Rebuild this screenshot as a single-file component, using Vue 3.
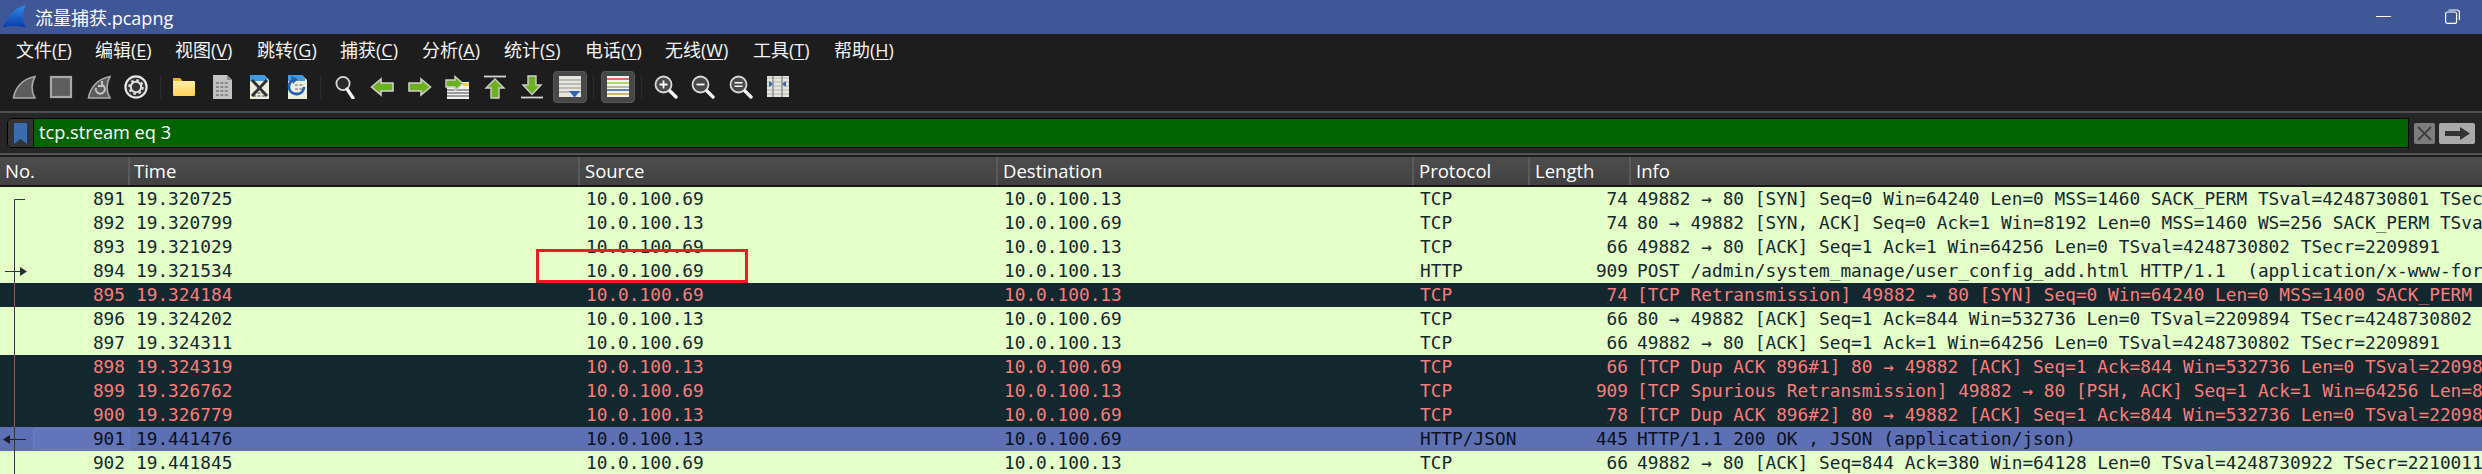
<script setup>
const menus = [
  ['文件(', 'F'], ['编辑(', 'E'], ['视图(', 'V'], ['跳转(', 'G'], ['捕获(', 'C'], ['分析(', 'A'],
  ['统计(', 'S'], ['电话(', 'Y'], ['无线(', 'W'], ['工具(', 'T'], ['帮助(', 'H']
]
const columns = ['No.', 'Time', 'Source', 'Destination', 'Protocol', 'Length', 'Info']
const A = '10.0.100.69'
const B = '10.0.100.13'
const rows = [
  ['891', '19.320725', A, B, 'TCP', '74', '49882 → 80 [SYN] Seq=0 Win=64240 Len=0 MSS=1460 SACK_PERM TSval=4248730801 TSecr=0 WS=256', ''],
  ['892', '19.320799', B, A, 'TCP', '74', '80 → 49882 [SYN, ACK] Seq=0 Ack=1 Win=8192 Len=0 MSS=1460 WS=256 SACK_PERM TSval=2209891 TSecr=4248730801', ''],
  ['893', '19.321029', A, B, 'TCP', '66', '49882 → 80 [ACK] Seq=1 Ack=1 Win=64256 Len=0 TSval=4248730802 TSecr=2209891', ''],
  ['894', '19.321534', A, B, 'HTTP', '909', 'POST /admin/system_manage/user_config_add.html HTTP/1.1  (application/x-www-form-urlencoded)', ''],
  ['895', '19.324184', A, B, 'TCP', '74', '[TCP Retransmission] 49882 → 80 [SYN] Seq=0 Win=64240 Len=0 MSS=1400 SACK_PERM TSval=4248730801 TSecr=0', 'bad'],
  ['896', '19.324202', B, A, 'TCP', '66', '80 → 49882 [ACK] Seq=1 Ack=844 Win=532736 Len=0 TSval=2209894 TSecr=4248730802', ''],
  ['897', '19.324311', A, B, 'TCP', '66', '49882 → 80 [ACK] Seq=1 Ack=1 Win=64256 Len=0 TSval=4248730802 TSecr=2209891', ''],
  ['898', '19.324319', B, A, 'TCP', '66', '[TCP Dup ACK 896#1] 80 → 49882 [ACK] Seq=1 Ack=844 Win=532736 Len=0 TSval=2209894 TSecr=4248730802', 'bad'],
  ['899', '19.326762', A, B, 'TCP', '909', '[TCP Spurious Retransmission] 49882 → 80 [PSH, ACK] Seq=1 Ack=1 Win=64256 Len=843 TSval=4248730802', 'bad'],
  ['900', '19.326779', B, A, 'TCP', '78', '[TCP Dup ACK 896#2] 80 → 49882 [ACK] Seq=1 Ack=844 Win=532736 Len=0 TSval=2209894 TSecr=4248730802', 'bad'],
  ['901', '19.441476', B, A, 'HTTP/JSON', '445', 'HTTP/1.1 200 OK , JSON (application/json)', 'hover'],
  ['902', '19.441845', A, B, 'TCP', '66', '49882 → 80 [ACK] Seq=844 Ack=380 Win=64128 Len=0 TSval=4248730922 TSecr=2210011', '']
]
const stripes = [3, 7, 11, 15, 19]
</script>

<template>
  <div class="app">
    <header class="titlebar">
      <svg class="logo" width="26" height="26" viewBox="0 0 26 26">
        <defs>
          <linearGradient id="logoFill" x1="0" y1="0" x2="0" y2="1">
            <stop offset="0" stop-color="#2f8fe8" />
            <stop offset="1" stop-color="#0a3aa8" />
          </linearGradient>
        </defs>
        <path d="M2 23.5C5 13 13 4 25 1C21 8 20 16 25 23.5C17 21.5 9 21.5 2 23.5Z" fill="url(#logoFill)" />
      </svg>
      <span class="title">流量捕获.pcapng</span>
      <div class="winctl">
        <svg width="15" height="15" viewBox="0 0 15 15"><path d="M0 7.5H15" stroke="#fff" stroke-width="1" /></svg>
        <svg width="15" height="15" viewBox="0 0 15 15" fill="none" stroke="#fff" stroke-width="1.2">
          <rect x="0.6" y="3" width="11" height="11.4" rx="2" />
          <path d="M3.5 1H12a2.4 2.4 0 0 1 2.4 2.4V11" />
        </svg>
      </div>
    </header>

    <nav class="menubar">
      <span v-for="m in menus" :key="m[1]" class="menu">{{ m[0] }}<u>{{ m[1] }}</u>)</span>
    </nav>

    <div class="toolbar">
      <span class="tool">
        <svg class="ic" viewBox="0 0 24 24"><path d="M1.5 23C3 13 10 4 23 1.5C19 9 19 16 23 23Z" fill="#5c5c5c" stroke="#a8a8a8" stroke-width="1.6" /></svg>
      </span>
      <span class="tool">
        <svg class="ic" viewBox="0 0 24 24"><rect x="2" y="2" width="20" height="20" fill="#5e5e5e" stroke="#a8a8a8" stroke-width="2.2" /></svg>
      </span>
      <span class="tool">
        <svg class="ic" viewBox="0 0 24 24">
          <path d="M1.5 23C3 13 10 4 23 1.5C19 9 19 16 23 23Z" fill="#5c5c5c" stroke="#a8a8a8" stroke-width="1.6" />
          <path d="M9 13a4.5 4.5 0 1 0 6-3M15 6v5h-4" fill="none" stroke="#c4c4c4" stroke-width="2" />
        </svg>
      </span>
      <span class="tool">
        <svg class="ic" viewBox="0 0 24 24" fill="none">
          <circle cx="12" cy="12" r="10.6" fill="#333" stroke="#e4e4e4" stroke-width="2.2" />
          <circle cx="12" cy="12" r="5.2" stroke="#e0e0e0" stroke-width="2" />
          <circle cx="12" cy="12" r="6.8" stroke="#e0e0e0" stroke-width="2" stroke-dasharray="2.6 2.74" />
        </svg>
      </span>
      <i class="sep"></i>
      <span class="tool">
        <svg class="ic" viewBox="0 0 24 24">
          <defs>
            <linearGradient id="folderFill" x1="0" y1="0" x2="0" y2="1">
              <stop offset="0" stop-color="#ffeeaa" />
              <stop offset="1" stop-color="#ffd257" />
            </linearGradient>
          </defs>
          <path d="M1 3H8L10 5V8H1Z" fill="#f0b023" />
          <rect x="1" y="6" width="22" height="15" rx="1" fill="url(#folderFill)" />
        </svg>
      </span>
      <span class="tool">
        <svg class="ic" viewBox="0 0 24 24">
          <path d="M3 0H17L22 5V24H3Z" fill="#c2c2c2" />
          <path d="M17 0V5H22Z" fill="#8c8c8c" />
          <path d="M6 8H19M6 12H19M6 16H19M6 20H19" stroke="#8a8a8a" stroke-width="2" stroke-dasharray="3 1.4" />
        </svg>
      </span>
      <span class="tool">
        <svg class="ic" viewBox="0 0 24 24">
          <path d="M3 0H17L22 5V24H3Z" fill="#eeeedd" />
          <path d="M3 0H17L20 3 V6H3Z" fill="#3f9ae0" />
          <path d="M6 18H19M6 21H19" stroke="#999" stroke-width="2" stroke-dasharray="3 1.4" />
          <path d="M5 5L20 21M20 5L5 21" stroke="#333" stroke-width="3" />
        </svg>
      </span>
      <span class="tool">
        <svg class="ic" viewBox="0 0 24 24">
          <path d="M3 0H17L22 5V24H3Z" fill="#eeeedd" />
          <path d="M3 0H17L20 3V6H3Z" fill="#3f9ae0" />
          <path d="M10 10H19M10 14H19M10 18H19" stroke="#aaa" stroke-width="2" stroke-dasharray="3 1.4" />
          <path d="M8 5A7.5 7.5 0 1 0 19 12" fill="none" stroke="#2260b0" stroke-width="2.6" />
          <path d="M6 1L13 4L8 9Z" fill="#2260b0" />
        </svg>
      </span>
      <i class="sep"></i>
      <span class="tool">
        <svg class="ic" viewBox="0 0 24 24">
          <circle cx="10" cy="8.5" r="6.6" fill="#2a2a2a" stroke="#d8d8d8" stroke-width="1.8" />
          <path d="M14 14L20 23" stroke="#f4f4f4" stroke-width="3.2" stroke-linecap="round" />
        </svg>
      </span>
      <span class="tool">
        <svg class="ic" viewBox="0 0 24 24"><path d="M1.5 12L11 4V8H23V16H11V20Z" fill="#6cb220" stroke="#cfcfcf" stroke-width="1.6" /></svg>
      </span>
      <span class="tool">
        <svg class="ic" viewBox="0 0 24 24"><path d="M22.5 12L13 4V8H1V16H13V20Z" fill="#6cb220" stroke="#cfcfcf" stroke-width="1.6" /></svg>
      </span>
      <span class="tool">
        <svg class="ic" viewBox="0 0 24 24">
          <rect x="2" y="12" width="22" height="12" fill="#f2f2f2" />
          <path d="M2 15H24M2 18H24M2 21H24" stroke="#444" stroke-width="1" />
          <rect x="12" y="7" width="12" height="5" fill="#f2f2f2" />
          <rect x="18" y="8" width="6" height="3" fill="#f0d040" />
          <path d="M18 8.5L10 1.5V5H1V12H10V15.5Z" fill="#6cb220" stroke="#cfcfcf" stroke-width="1.4" />
        </svg>
      </span>
      <span class="tool">
        <svg class="ic" viewBox="0 0 24 24">
          <path d="M1 1.5H23" stroke="#d4d4d4" stroke-width="1.8" />
          <path d="M12 4L21 13H16V23H8V13H3Z" fill="#6cb220" stroke="#cfcfcf" stroke-width="1.4" />
        </svg>
      </span>
      <span class="tool">
        <svg class="ic" viewBox="0 0 24 24">
          <path d="M1 22.5H23" stroke="#d4d4d4" stroke-width="1.8" />
          <path d="M8 1H16V10H21L12 19.5L3 10H8Z" fill="#6cb220" stroke="#cfcfcf" stroke-width="1.4" />
        </svg>
      </span>
      <span class="tool on">
        <svg class="ic" viewBox="0 0 24 24">
          <rect x="1" y="1" width="22" height="21" fill="#e6e6e0" />
          <path d="M1 5H23M1 9H23M1 13H23M1 17H23" stroke="#8f8f8a" stroke-width="1" />
          <path d="M11 16H22L16.5 22.5Z" fill="#2f66b4" />
        </svg>
      </span>
      <i class="sep"></i>
      <span class="tool on">
        <svg class="ic" viewBox="0 0 24 24">
          <rect x="1" y="1" width="22" height="21" fill="#f4f4f0" />
          <path d="M1 4H23" stroke="#e03030" stroke-width="1.4" />
          <path d="M1 8H23" stroke="#8fd020" stroke-width="1.4" />
          <path d="M1 12H23" stroke="#a0a0a0" stroke-width="1.4" />
          <path d="M1 15H23" stroke="#304c9c" stroke-width="1.4" />
          <path d="M1 19H23" stroke="#c89a30" stroke-width="1.4" />
        </svg>
      </span>
      <i class="sep"></i>
      <span class="tool">
        <svg class="ic" viewBox="0 0 24 24">
          <circle cx="9.5" cy="9.5" r="8" fill="#4a4a4a" stroke="#d8d8d8" stroke-width="1.8" />
          <path d="M5.5 9.5H13.5M9.5 5.5V13.5" stroke="#fff" stroke-width="1.8" />
          <path d="M16 16L22 22" stroke="#f4f4f4" stroke-width="3.4" stroke-linecap="round" />
        </svg>
      </span>
      <span class="tool">
        <svg class="ic" viewBox="0 0 24 24">
          <circle cx="9.5" cy="9.5" r="8" fill="#4a4a4a" stroke="#d8d8d8" stroke-width="1.8" />
          <path d="M5.5 9.5H13.5" stroke="#fff" stroke-width="1.8" />
          <path d="M16 16L22 22" stroke="#f4f4f4" stroke-width="3.4" stroke-linecap="round" />
        </svg>
      </span>
      <span class="tool">
        <svg class="ic" viewBox="0 0 24 24">
          <circle cx="9.5" cy="9.5" r="8" fill="#4a4a4a" stroke="#d8d8d8" stroke-width="1.8" />
          <path d="M5.5 7.8H13.5M5.5 11.2H13.5" stroke="#fff" stroke-width="1.6" />
          <path d="M16 16L22 22" stroke="#f4f4f4" stroke-width="3.4" stroke-linecap="round" />
        </svg>
      </span>
      <span class="tool">
        <svg class="ic" viewBox="0 0 24 24">
          <rect x="1" y="1" width="22" height="21" fill="#e6e6e0" />
          <path v-for="y in stripes" :key="y" :d="`M1 ${y}H23`" stroke="#b4b4ae" stroke-width="1" />
          <path d="M7 1V22M16 1V22" stroke="#8a8a8a" stroke-width="1.4" />
          <path d="M3 6L7 9L3 12ZM20 6L16 9L20 12Z" fill="#2f66b4" />
        </svg>
      </span>
    </div>

    <div class="filterbar">
      <div class="filter">
        <span class="bookmark">
          <svg width="13" height="21" viewBox="0 0 13 21"><path d="M0 0H13V21L6.5 16L0 21Z" fill="#3a6cb0" /></svg>
        </span>
        <span class="expr">tcp.stream eq 3</span>
      </div>
      <span class="clear">
        <svg width="15" height="15" viewBox="0 0 15 15"><path d="M1 1L14 14M14 1L1 14" stroke="#3e3e3e" stroke-width="1.8" /></svg>
      </span>
      <span class="apply">
        <svg width="25" height="13" viewBox="0 0 25 13"><path d="M0 4H15V0L25 6.5L15 13V9H0Z" fill="#333" /></svg>
      </span>
    </div>

    <div class="head gridrow">
      <span v-for="c in columns" :key="c" class="hcell">{{ c }}</span>
    </div>

    <div class="list">
      <div v-for="r in rows" :key="r[0]" class="row gridrow" :class="r[7]">
        <span class="cell no">{{ r[0] }}</span>
        <span class="cell">{{ r[1] }}</span>
        <span class="cell">{{ r[2] }}</span>
        <span class="cell">{{ r[3] }}</span>
        <span class="cell">{{ r[4] }}</span>
        <span class="cell len">{{ r[5] }}</span>
        <span class="cell">{{ r[6] }}</span>
      </div>
      <svg class="related" width="30" height="287" viewBox="0 0 30 287" fill="none">
        <path d="M25 12.5H14.5V96" stroke="#30363a" stroke-width="1" />
        <path d="M14.5 96V120" stroke="#8a5a5e" stroke-width="1" />
        <path d="M14.5 120V168" stroke="#30363a" stroke-width="1" />
        <path d="M14.5 168V240" stroke="#8a5a5e" stroke-width="1" />
        <path d="M14.5 240V287" stroke="#30363a" stroke-width="1" />
        <path d="M5 84.5H22" stroke="#333" stroke-width="1" />
        <path d="M20 80L27 84.5L20 89Z" fill="#2a2e30" />
        <path d="M26 252.5H8" stroke="#222" stroke-width="1" />
        <path d="M3 252.5L10 248V257Z" fill="#1a1e28" />
      </svg>
      <div class="highlight"></div>
    </div>
  </div>
</template>

<style scoped>
.app {
  width: 2482px;
  height: 474px;
  overflow: hidden;
  background: #1d1d1d;
  font-family: "Open Sans", "Noto Sans CJK SC", sans-serif;
  color: #fff;
  display: flex;
  flex-direction: column;
}
.titlebar {
  height: 34px;
  flex: none;
  background: #3f5796;
  display: flex;
  align-items: center;
  padding: 0 22px 0 1px;
  font-size: 18px;
}
.logo { flex: none; }
.title { margin-left: 8px; }
.winctl {
  margin-left: auto;
  display: flex;
  gap: 54px;
  margin-top: -2px;
}
.menubar {
  height: 29px;
  flex: none;
  display: grid;
  grid-template-columns: 79px 80px 82px 83px 82px 82px 81px 80px 88px 81px auto;
  justify-content: start;
  align-items: center;
  padding-left: 16px;
  font-size: 18px;
  color: #f4f4f4;
}
.menu { white-space: nowrap; }
.menu u { text-underline-offset: 2px; }
.toolbar {
  height: 48px;
  flex: none;
  display: flex;
  align-items: center;
  padding-left: 5px;
  border-bottom: 2px solid #4f4f4f;
  box-sizing: content-box;
}
.tool {
  width: 37.5px;
  height: 32px;
  flex: none;
  display: flex;
  align-items: center;
  justify-content: center;
  box-sizing: border-box;
}
.tool.on {
  width: 34px;
  margin: 0 1.75px;
  background: #484848;
  border: 1px solid #565656;
  border-radius: 4px;
}
.ic { width: 24px; height: 24px; flex: none; }
.sep {
  width: 10.5px;
  height: 24px;
  flex: none;
  display: block;
  background: linear-gradient(#2b2b2b, #2b2b2b) center / 1px 100% no-repeat;
}
.filterbar {
  height: 40px;
  flex: none;
  display: flex;
  align-items: center;
  padding: 0 7px;
  background: #262626;
  border-bottom: 2px solid #555;
  box-sizing: content-box;
}
.filter {
  flex: 1;
  height: 30px;
  display: flex;
  background: #006400;
  border: 1px solid #000;
  border-radius: 5px 0 0 5px;
  box-sizing: border-box;
  overflow: hidden;
}
.bookmark {
  width: 26px;
  flex: none;
  background: #333;
  display: flex;
  align-items: center;
  justify-content: center;
  border-right: 1px solid #111;
  box-sizing: border-box;
}
.expr {
  margin-left: 5px;
  font-size: 18.2px;
  line-height: 27px;
}
.clear, .apply {
  height: 21px;
  flex: none;
  display: flex;
  align-items: center;
  justify-content: center;
  border-radius: 2px;
}
.clear {
  width: 21px;
  margin-left: 5px;
  background: #7d7d7d;
}
.apply {
  width: 36px;
  margin-left: 4px;
  background: #aaa;
}
.gridrow {
  display: grid;
  grid-template-columns: 128px 450px 418px 416px 116px 101px 1fr;
  padding-left: 2px;
}
.head {
  margin-top: 2px;
  height: 30px;
  flex: none;
  background: linear-gradient(#4d4d4d, #414141);
  border-bottom: 2px solid #161616;
  box-sizing: border-box;
}
.hcell {
  font-size: 18.5px;
  line-height: 27px;
  padding-left: 5px;
  border-right: 2px solid #5a5a5a;
  color: #fff;
}
.hcell:nth-child(1) { padding-left: 3px; }
.hcell:nth-child(2) { padding-left: 4px; }
.hcell:last-child { border-right: 0; }
.list {
  flex: 1;
  position: relative;
  overflow: hidden;
  background: #1d1d1d;
  font-family: "DejaVu Sans Mono", monospace;
  font-size: 17.8px;
}
.row {
  height: 24px;
  line-height: 24px;
  background: #e4ffc7;
  color: #12272e;
}
.row.bad {
  background: #12272e;
  color: #f87d7b;
}
.row.hover {
  background: #5d70b3;
  color: #0a1020;
}
.cell {
  padding-left: 6px;
  white-space: pre;
  overflow: hidden;
}
.cell.no, .cell.len {
  padding: 0 5px 0 0;
  text-align: right;
  position: relative;
  isolation: isolate;
}
.cell.len { padding-right: 3px; }
.row.hover .cell.no::before {
  content: "";
  position: absolute;
  inset: 1px 0 1px 31px;
  z-index: -1;
  background: #6375ba;
  border: 1px solid #6c7dbe;
  border-radius: 2px;
}
.related {
  position: absolute;
  left: 0;
  top: 0;
}
.highlight {
  position: absolute;
  left: 536px;
  top: 62px;
  width: 212px;
  height: 34px;
  border: 3px solid #ed1c24;
  box-sizing: border-box;
}
</style>

<style>
html, body { margin: 0; background: #1d1d1d; overflow: hidden; }
</style>
